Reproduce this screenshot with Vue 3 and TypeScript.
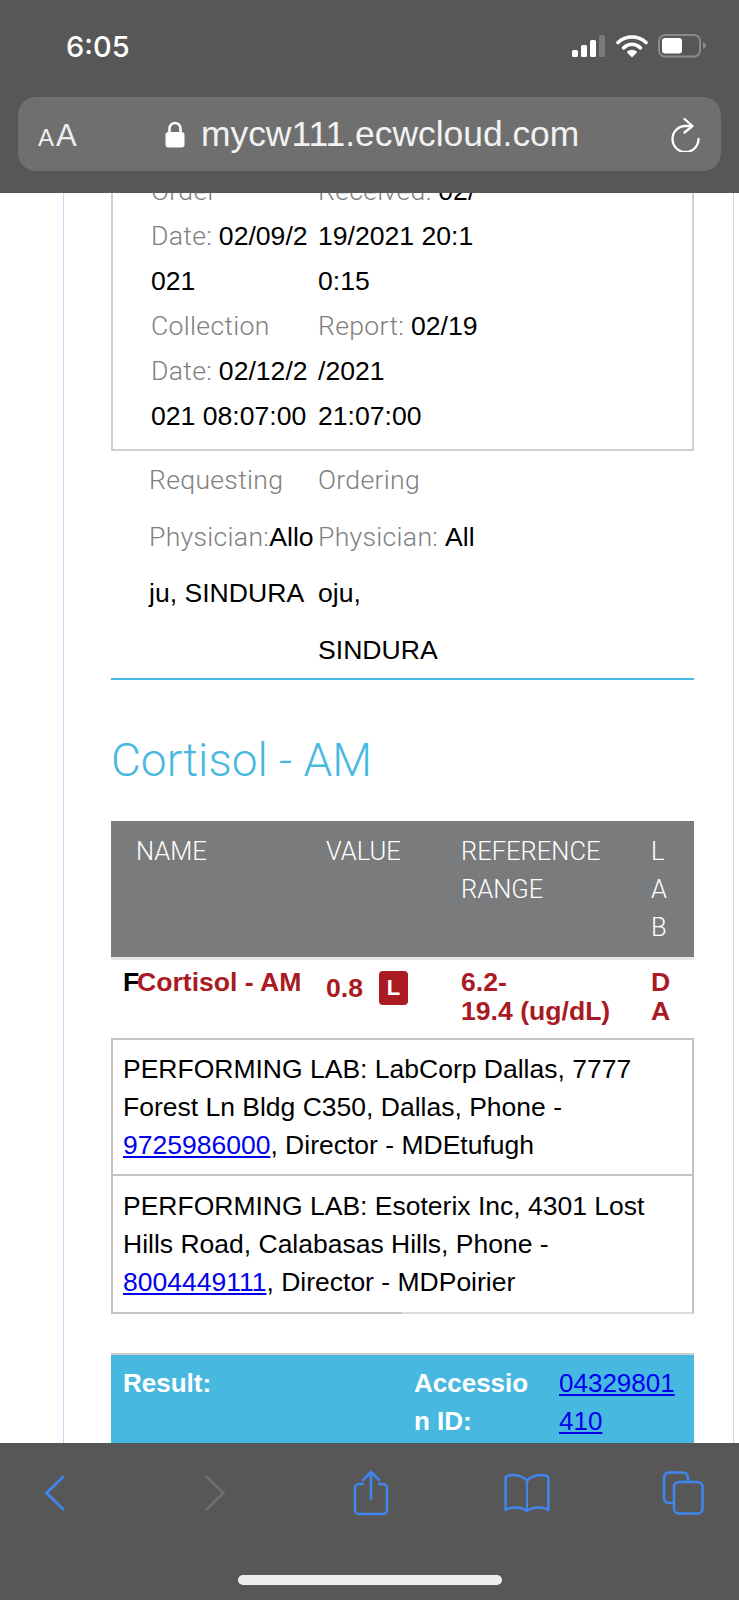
<script setup lang="ts">
interface Part { label?: string; value?: string }
const orderLeft: Part[] = [
  { label: 'Order' },
  { label: 'Date: ', value: '02/09/2' },
  { value: '021' },
  { label: 'Collection' },
  { label: 'Date: ', value: '02/12/2' },
  { value: '021 08:07:00' },
]
const orderRight: Part[] = [
  { label: 'Received: ', value: '02/' },
  { value: '19/2021 20:1' },
  { value: '0:15' },
  { label: 'Report: ', value: '02/19' },
  { value: '/2021' },
  { value: '21:07:00' },
]
const reqLeft: Part[] = [
  { label: 'Requesting' },
  { label: 'Physician:', value: 'Allo' },
  { value: 'ju, SINDURA' },
]
const reqRight: Part[] = [
  { label: 'Ordering' },
  { label: 'Physician: ', value: 'All' },
  { value: 'oju,' },
  { value: 'SINDURA' },
]
</script>

<template>
  <div class="page">
    <header class="top">
      <div class="status">
        <span class="time">6:05</span>
        <div class="status-icons">
          <svg width="34" height="24" viewBox="0 0 34 24">
            <rect x="0" y="16" width="6" height="7" rx="1.5" fill="#fff" />
            <rect x="9" y="11" width="6" height="12" rx="1.5" fill="#fff" />
            <rect x="18" y="6" width="6" height="17" rx="1.5" fill="#fff" />
            <rect x="27" y="1" width="6" height="22" rx="1.5" fill="#7b7b7b" />
          </svg>
          <svg width="32" height="24" viewBox="0 0 32 24">
            <path d="M2 8.5C10 1.2 22 1.2 30 8.5" fill="none" stroke="#fff" stroke-width="3.6" stroke-linecap="round" />
            <path d="M7.5 13.8C12.8 9.2 19.2 9.2 24.5 13.8" fill="none" stroke="#fff" stroke-width="3.6" stroke-linecap="round" />
            <path d="M10.8 18.2C14 15 18 15 21.2 18.2L16 23.5Z" fill="#fff" />
          </svg>
          <svg width="50" height="24" viewBox="0 0 50 24">
            <rect x="1" y="1" width="41" height="21.5" rx="6" fill="none" stroke="#8a8a8a" stroke-width="2" />
            <rect x="4" y="4" width="20" height="15.5" rx="3" fill="#fff" />
            <path d="M45 8.5C47 9 48 10.2 48 11.8S47 14.6 45 15Z" fill="#8a8a8a" />
          </svg>
        </div>
      </div>
      <div class="urlbar">
        <span class="aa"><small>A</small>A</span>
        <div class="address">
          <svg width="20" height="27" viewBox="0 0 20 27">
            <path d="M4.5 12V7.5a5.5 5.5 0 0 1 11 0V12" fill="none" stroke="#fff" stroke-width="2.6" />
            <rect x="0.5" y="11" width="19" height="15.5" rx="3" fill="#fff" />
          </svg>
          <span class="url">mycw111.ecwcloud.com</span>
        </div>
        <svg class="reload" width="30" height="36" viewBox="0 0 30 36">
          <path d="M21 10H14.5A13 13 0 1 0 27.5 23" fill="none" stroke="#fff" stroke-width="2.3" stroke-linecap="round" />
          <path d="M13.5 3L21.5 10L13.5 16.5" fill="none" stroke="#fff" stroke-width="2.3" stroke-linecap="round" stroke-linejoin="round" />
        </svg>
      </div>
    </header>

    <main class="viewport">
      <div class="sheet">
        <section class="order-box">
          <div class="col">
            <div v-for="(p, i) in orderLeft" :key="i" class="line">
              <span class="muted">{{ p.label }}</span>{{ p.value }}
            </div>
          </div>
          <div class="col">
            <div v-for="(p, i) in orderRight" :key="i" class="line">
              <span class="muted">{{ p.label }}</span>{{ p.value }}
            </div>
          </div>
        </section>

        <section class="req">
          <div class="col">
            <div v-for="(p, i) in reqLeft" :key="i" class="req-line">
              <span class="muted">{{ p.label }}</span>{{ p.value }}
            </div>
          </div>
          <div class="col">
            <div v-for="(p, i) in reqRight" :key="i" class="req-line">
              <span class="muted">{{ p.label }}</span>{{ p.value }}
            </div>
          </div>
        </section>

        <h1 class="title">Cortisol - AM</h1>

        <div class="thead tcols">
          <div class="name-h">NAME</div>
          <div>VALUE</div>
          <div>REFERENCE<br />RANGE</div>
          <div>L<br />A<br />B</div>
        </div>
        <div class="trow tcols">
          <div class="name-c"><span class="f">F</span><span class="cname">Cortisol - AM</span></div>
          <div class="val"><span class="num">0.8</span><span class="badge">L</span></div>
          <div>6.2-<br />19.4 (ug/dL)</div>
          <div>D<br />A</div>
        </div>

        <div class="lab">
          PERFORMING LAB: LabCorp Dallas, 7777<br />
          Forest Ln Bldg C350, Dallas, Phone -<br />
          <a href="#">9725986000</a>, Director - MDEtufugh
        </div>
        <div class="lab second">
          PERFORMING LAB: Esoterix Inc, 4301 Lost<br />
          Hills Road, Calabasas Hills, Phone -<br />
          <a href="#">8004449111</a>, Director - MDPoirier
        </div>

        <div class="result">
          <div>Result:</div>
          <div>Accessio<br />n ID:</div>
          <div><a href="#">04329801</a><br /><a href="#">410</a></div>
        </div>
      </div>
    </main>

    <footer class="bottom">
      <div class="tools">
        <svg width="21" height="36" viewBox="0 0 21 36">
          <path d="M19 2L2.5 18L19 34" fill="none" stroke="#3f86ec" stroke-width="3" stroke-linecap="round" stroke-linejoin="round" />
        </svg>
        <svg class="t-forward" width="21" height="36" viewBox="0 0 21 36">
          <path d="M2 2L18.5 18L2 34" fill="none" stroke="#6e6e6e" stroke-width="3" stroke-linecap="round" stroke-linejoin="round" />
        </svg>
        <svg class="t-share" width="36" height="46" viewBox="0 0 36 46">
          <path d="M11 14H6a4 4 0 0 0-4 4v22a4 4 0 0 0 4 4h24a4 4 0 0 0 4-4V18a4 4 0 0 0-4-4h-5" fill="none" stroke="#3f86ec" stroke-width="2.6" />
          <path d="M18 29V2M10 10L18 2L26 10" fill="none" stroke="#3f86ec" stroke-width="2.6" stroke-linecap="round" stroke-linejoin="round" />
        </svg>
        <svg class="t-book" width="46" height="40" viewBox="0 0 46 40">
          <path d="M23 8C19 2 8 1 3 3C2 3.3 1.6 4 1.6 5V37C6 34 17 33 23 38C29 33 40 34 44.4 37V5C44.4 4 44 3.3 43 3C38 1 27 2 23 8Z" fill="none" stroke="#3f86ec" stroke-width="2.6" stroke-linejoin="round" />
          <path d="M23 8V37" fill="none" stroke="#3f86ec" stroke-width="2.2" />
        </svg>
        <svg class="t-tabs" width="42" height="44" viewBox="0 0 42 44">
          <rect x="12" y="11" width="28.5" height="31.5" rx="5" fill="none" stroke="#3f86ec" stroke-width="2.6" />
          <path d="M12 32H7a5 5 0 0 1-5-5V6.5a5 5 0 0 1 5-5h14a5 5 0 0 1 5 5V11" fill="none" stroke="#3f86ec" stroke-width="2.6" />
        </svg>
      </div>
      <div class="home"></div>
    </footer>
  </div>
</template>

<style>
html, body { margin: 0; background: #fff; }
</style>

<style scoped>
.page {
  width: 739px;
  height: 1600px;
  display: flex;
  flex-direction: column;
  overflow: hidden;
  font-family: "Liberation Sans", Arial, sans-serif;
  color: #000;
}
.top {
  height: 193px;
  flex: none;
  box-sizing: border-box;
  background: #575757;
  padding: 0 18px;
  position: relative;
  z-index: 1;
}
.status {
  height: 97px;
  box-sizing: border-box;
  padding: 28px 13px 0 48px;
  display: flex;
  justify-content: space-between;
}
.time {
  font-family: Inter, sans-serif;
  font-weight: 500;
  font-size: 29px;
  line-height: 38px;
  color: #fff;
}
.status-icons {
  display: flex;
  align-items: flex-start;
  gap: 10px;
  padding-top: 6px;
}
.urlbar {
  height: 74px;
  background: #6f6f6f;
  border-radius: 18px;
  display: flex;
  align-items: center;
  padding: 0 20px;
}
.aa {
  color: #eee;
  font-size: 31px;
  width: 38px;
  line-height: 1;
  padding-top: 2px;
  white-space: nowrap;
}
.aa small { font-size: 24px; margin-right: 2px; }
.address {
  display: flex;
  align-items: center;
  gap: 16px;
  margin-left: 89px;
}
.url {
  color: #f2f2f2;
  font-size: 35.4px;
  line-height: 44px;
}
.reload { margin-left: auto; }
.viewport {
  flex: 1;
  min-height: 0;
  overflow: hidden;
}
.sheet {
  margin: 0 5px 0 63px;
  padding: 0 39px 0 47px;
  height: calc(100% + 25px);
  border-left: 1px solid #c2dbf0;
  border-right: 1px solid #c2dbf0;
  font-size: 26.6px;
}
.order-box {
  margin-top: -25px;
  border: 2px solid #cfcfcf;
  border-top: 0;
  padding: 0 0 11px 38px;
  display: grid;
  grid-template-columns: 167px 1fr;
}
.line { height: 45px; line-height: 45px; white-space: nowrap; }
.muted {
  color: #808080;
  font-family: Roboto, "Liberation Sans", sans-serif;
  font-weight: 300;
  letter-spacing: 0.3px;
}
.req {
  margin-top: 1px;
  padding: 0 0 0 38px;
  display: grid;
  grid-template-columns: 169px 1fr;
  border-bottom: 2px solid #47b9e0;
  height: 228px;
  box-sizing: border-box;
}
.req-line { height: 56.6px; line-height: 56.6px; white-space: nowrap; }
.title {
  margin: 50px 0 31px;
  font-family: Roboto, "Liberation Sans", sans-serif;
  font-size: 46px;
  line-height: 60px;
  font-weight: 300;
  color: #47b9e0;
}
.tcols {
  display: grid;
  grid-template-columns: 215px 135px 190px 42px;
}
.thead {
  background: #7a7b7d;
  color: #fff;
  font-family: Roboto, "Liberation Sans", sans-serif;
  font-weight: 300;
  font-size: 25.5px;
  line-height: 38px;
  padding: 11px 0 11px;
  border-bottom: 3px solid #e8e8e8;
}
.name-h { padding-left: 25px; }
.trow {
  color: #a91a22;
  font-weight: 700;
  font-size: 26.6px;
  line-height: 29px;
  padding: 8px 0 12px;
}
.name-c { padding-left: 12px; white-space: nowrap; }
.f { color: #000; display: inline-block; width: 14px; }
.val {
  display: flex;
  align-items: flex-start;
  gap: 16px;
}
.num { padding-top: 6px; }
.badge {
  width: 29px;
  height: 34px;
  margin-top: 3px;
  border-radius: 4px;
  background: #a91a22;
  color: #fff;
  font-size: 22px;
  line-height: 34px;
  text-align: center;
}
.lab {
  border: 2px solid #c4c4c4;
  padding: 10px 0 10px 10px;
  font-size: 26.5px;
  line-height: 38px;
  white-space: nowrap;
}
.lab.second {
  position: relative;
  border-top: 0;
  border-bottom-color: #dcdcdc;
  padding-top: 11px;
  padding-bottom: 11px;
}
.lab.second::after {
  content: "";
  position: absolute;
  left: -2px;
  bottom: -2px;
  width: 291px;
  height: 2px;
  background: #c4c4c4;
}
a { color: #0000ee; text-decoration: underline; }
.result {
  margin-top: 39px;
  background: #47b9e0;
  border-top: 2px solid #cfcfcf;
  padding: 9px 0 20px 12px;
  color: #fff;
  font-weight: 700;
  font-size: 26px;
  line-height: 38px;
  display: grid;
  grid-template-columns: 291px 145px 1fr;
}
.result a { font-weight: 400; }
.bottom {
  height: 157px;
  flex: none;
  background: #575757;
  position: relative;
  z-index: 1;
}
.tools {
  display: flex;
  align-items: center;
  padding: 27px 0 0 44px;
  height: 46px;
}
.t-forward { margin-left: 140px; }
.t-share { margin-left: 127px; }
.t-book { margin-left: 115px; }
.t-tabs { margin-left: 112px; }
.home {
  position: absolute;
  left: 238px;
  bottom: 15px;
  width: 264px;
  height: 10px;
  border-radius: 5px;
  background: #eeeeee;
}
</style>
